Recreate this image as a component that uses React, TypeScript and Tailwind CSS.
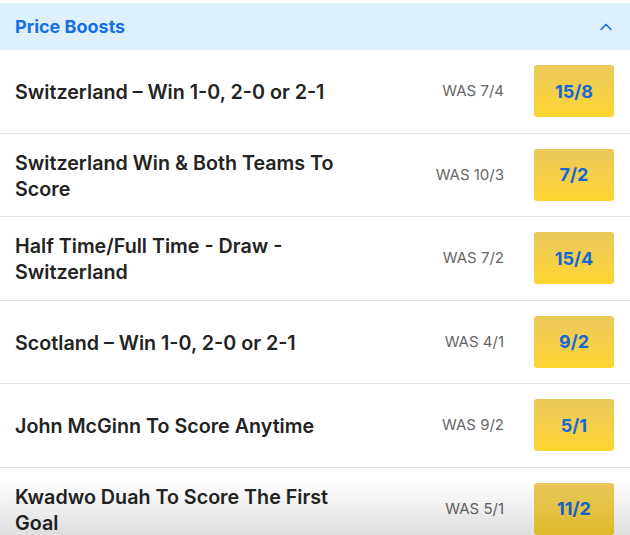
import { ChevronUp } from 'lucide-react'

const boosts = [
  { title: 'Switzerland – Win 1-0, 2-0 or 2-1', was: '7/4', odds: '15/8' },
  { title: 'Switzerland Win & Both Teams To Score', was: '10/3', odds: '7/2' },
  { title: 'Half Time/Full Time - Draw - Switzerland', was: '7/2', odds: '15/4' },
  { title: 'Scotland – Win 1-0, 2-0 or 2-1', was: '4/1', odds: '9/2' },
  { title: 'John McGinn To Score Anytime', was: '9/2', odds: '5/1' },
  { title: 'Kwadwo Duah To Score The First Goal', was: '5/1', odds: '11/2' },
]

export default function App() {
  return (
    <div
      className="relative w-[630px] h-[535px] overflow-hidden bg-white pt-[3px]"
      style={{ fontFamily: 'Inter, "Noto Sans", sans-serif' }}
    >
      <div className="flex items-center justify-between h-[47px] bg-[#dff0fd] pl-[15px] pr-[14px]">
        <span className="text-[18px] font-bold text-[#1570e6]">Price Boosts</span>
        <ChevronUp className="w-[20px] h-[20px] text-[#1a6fe0]" strokeWidth={2} />
      </div>

      {boosts.map((b) => (
        <div key={b.title} className="flex items-center h-[83.5px] border-b border-[#e4e4e4] pl-[15px] pr-[16px]">
          <div className="w-[345px] text-[19.7px] leading-[26px] font-semibold text-[#232323] pt-[2px]">
            {b.title}
          </div>
          <div className="flex-1 text-right pr-[30px] text-[15px] text-[#666666]">WAS {b.was}</div>
          <div className="w-[80px] h-[52px] rounded-[3px] bg-gradient-to-b from-[#e9c85a] to-[#fed62e] flex items-center justify-center text-[18px] font-bold text-[#1467d8]">
            {b.odds}
          </div>
        </div>
      ))}

      <div className="absolute left-0 right-0 bottom-0 h-[55px] bg-gradient-to-b from-transparent to-[rgba(0,0,0,0.13)] pointer-events-none" />
    </div>
  )
}
